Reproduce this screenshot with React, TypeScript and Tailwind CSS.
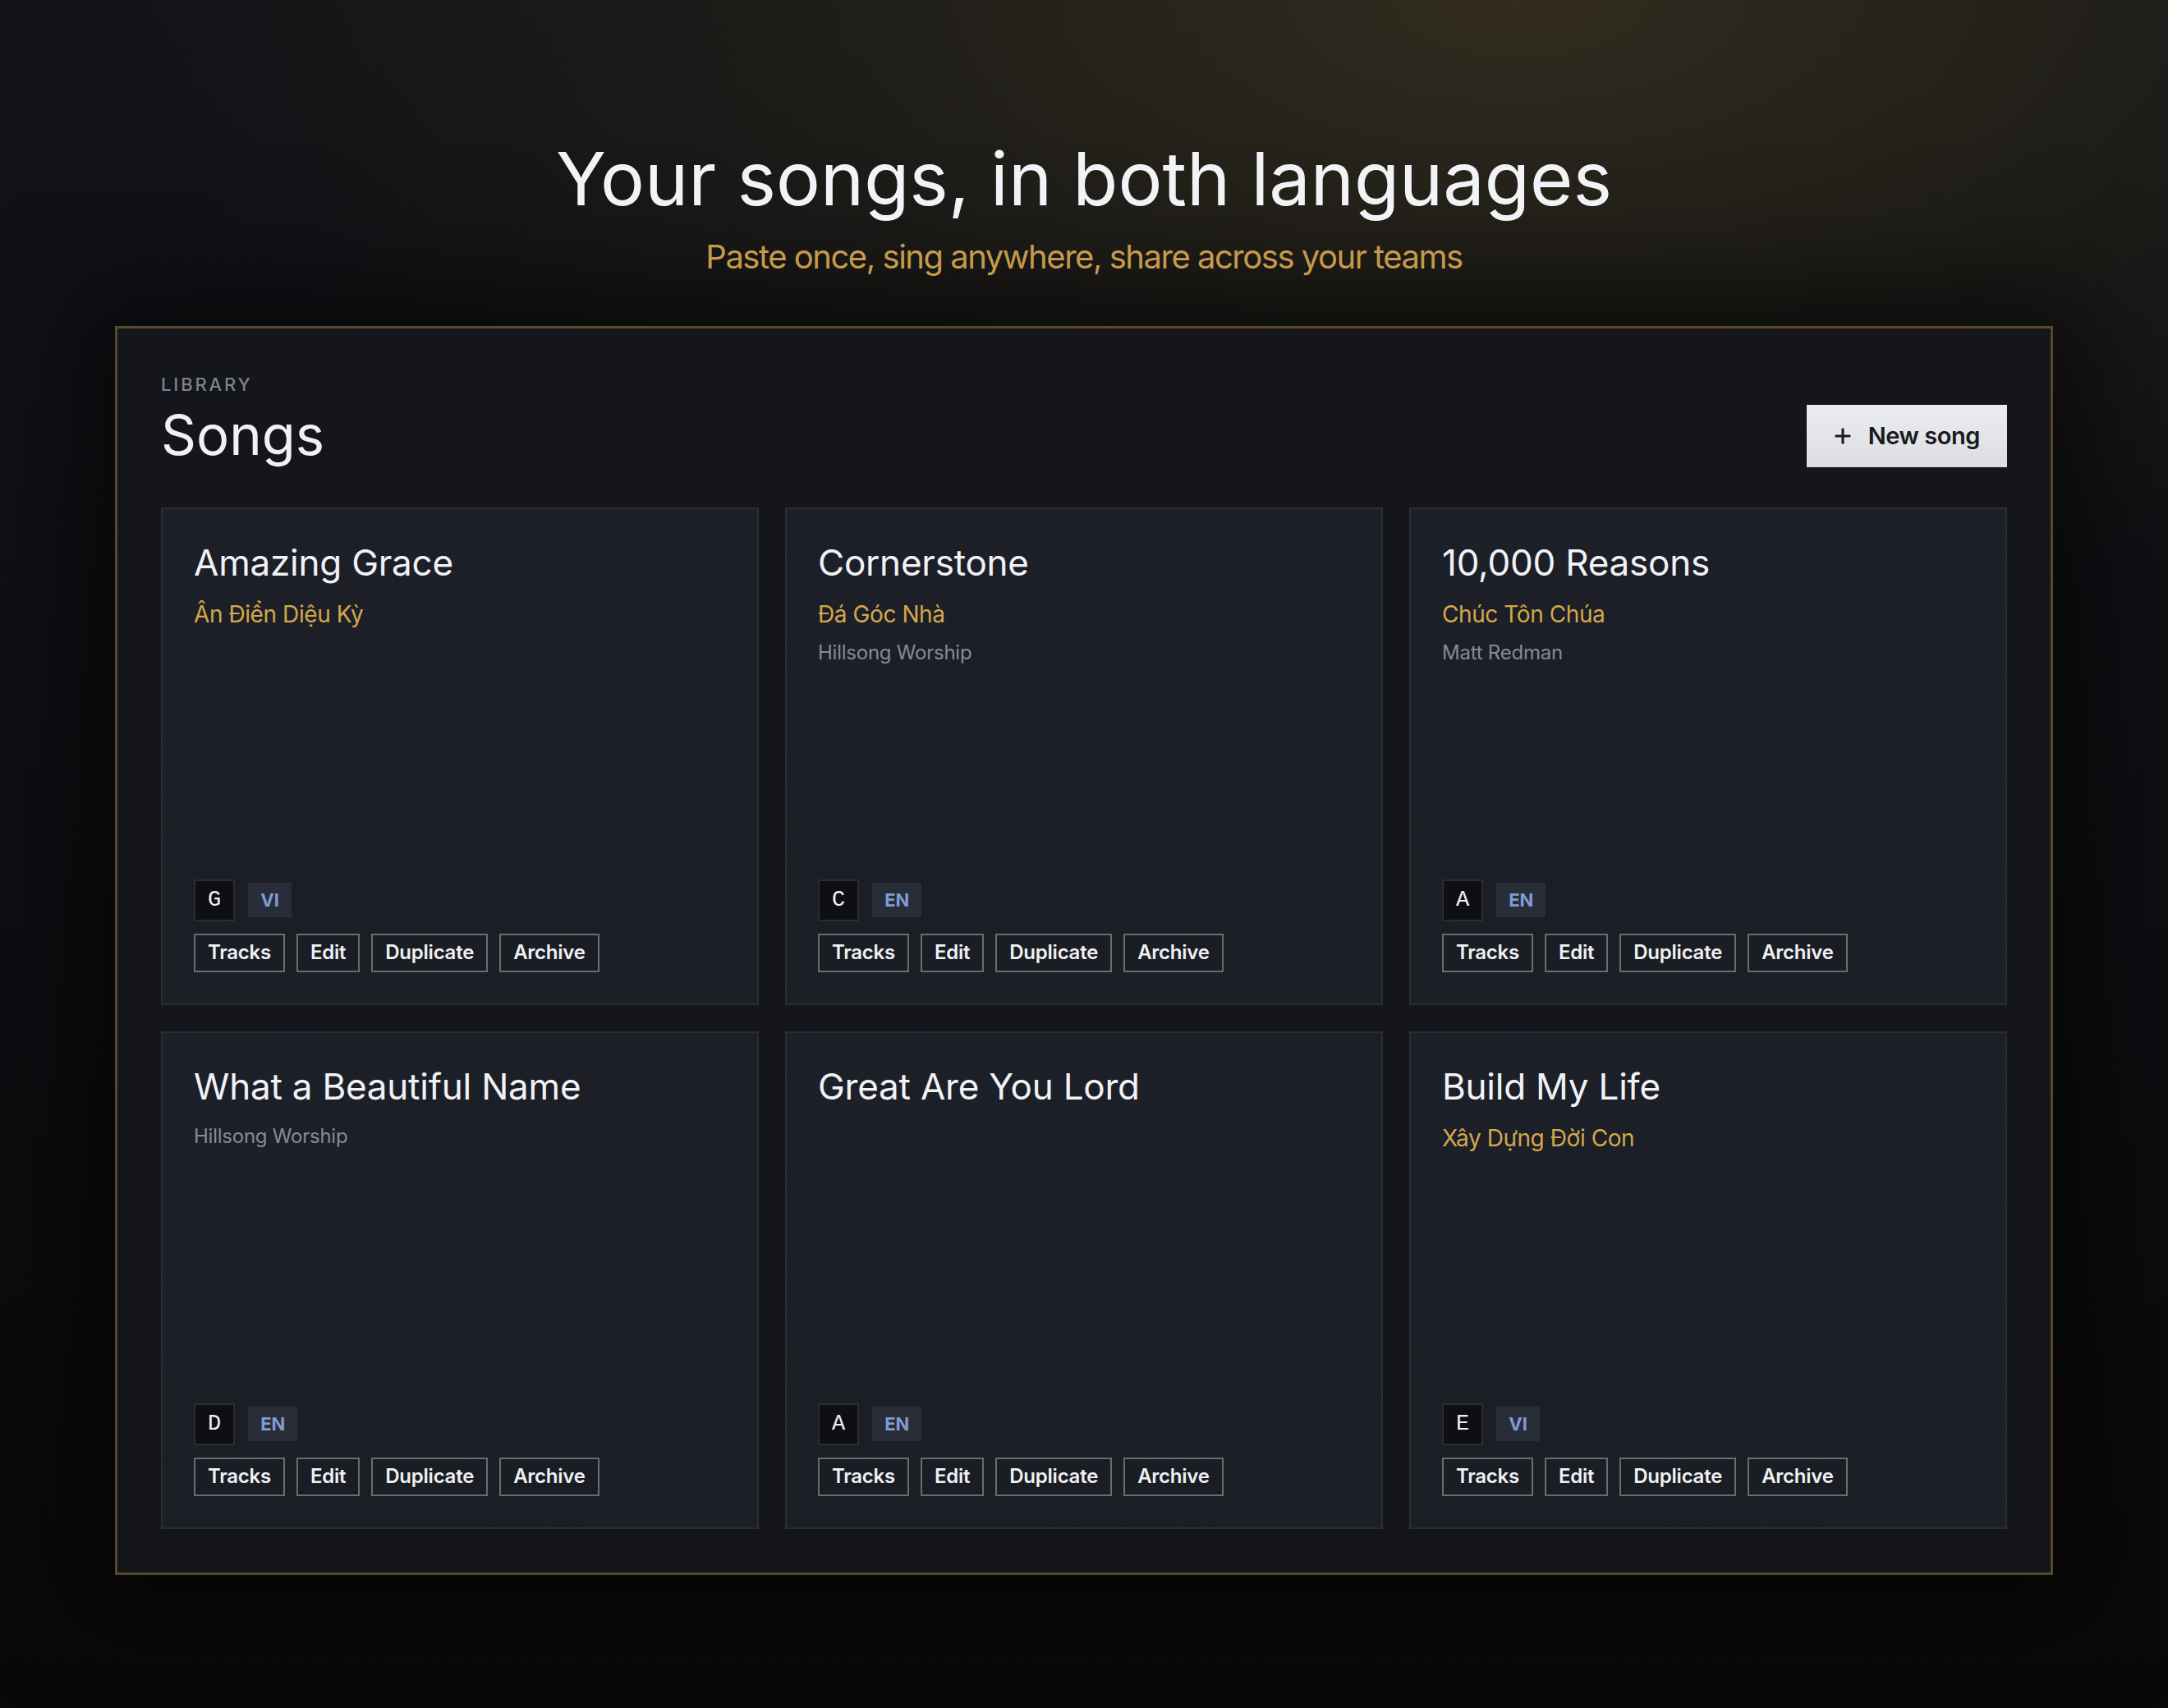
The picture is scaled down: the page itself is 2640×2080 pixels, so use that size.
import { Plus } from "lucide-react";

type Song = {
  title: string;
  vi?: string;
  artist?: string;
  songKey: string;
  lang: string;
};

const songs: Song[] = [
  { title: "Amazing Grace", vi: "Ân Điển Diệu Kỳ", songKey: "G", lang: "VI" },
  {
    title: "Cornerstone",
    vi: "Đá Góc Nhà",
    artist: "Hillsong Worship",
    songKey: "C",
    lang: "EN",
  },
  {
    title: "10,000 Reasons",
    vi: "Chúc Tôn Chúa",
    artist: "Matt Redman",
    songKey: "A",
    lang: "EN",
  },
  {
    title: "What a Beautiful Name",
    artist: "Hillsong Worship",
    songKey: "D",
    lang: "EN",
  },
  { title: "Great Are You Lord", songKey: "A", lang: "EN" },
  { title: "Build My Life", vi: "Xây Dựng Đời Con", songKey: "E", lang: "VI" },
];

const actions = ["Tracks", "Edit", "Duplicate", "Archive"];

function SongCard({ song }: { song: Song }) {
  return (
    <article className="flex min-h-[606px] flex-col justify-between border-2 border-[#2a2d34] bg-[linear-gradient(160deg,#1d2028_0%,#1b1e25_60%,#1c1f26_100%)] px-[38px] pt-[39px] pb-[38px]">
      <div className="flex flex-col">
        <h3 className="text-[44px] leading-[1.2] font-normal tracking-[-0.005em] text-[#f1f2f6]">
          {song.title}
        </h3>
        {song.vi && (
          <p className="mt-[18px] text-[28px] leading-[1.3] tracking-[-0.015em] text-[#d3a84b]">
            {song.vi}
          </p>
        )}
        {song.artist && (
          <p
            className={`${song.vi ? "mt-[13px]" : "mt-[18px]"} text-[24px] leading-[1.3] tracking-[-0.01em] text-[#868b97]`}
          >
            {song.artist}
          </p>
        )}
      </div>

      <div className="flex flex-col gap-[15px]">
        <div className="flex items-center gap-4">
          <span className="flex h-[51px] items-center border-2 border-[#2b2d33] bg-[#0e0f12] px-[15px] font-['Liberation_Mono',monospace] text-[27px] text-[#f2f2f4]">
            {song.songKey}
          </span>
          <span className="flex h-[42px] items-center bg-[#282d38] px-[15px] text-[22px] font-bold text-[#7f9cd3]">
            {song.lang}
          </span>
        </div>
        <div className="flex gap-[14px]">
          {actions.map((action) => (
            <button
              key={action}
              type="button"
              className="h-[47px] border-2 border-[#6a6c72] bg-[#1a1d23] px-[15px] text-[24px] font-semibold tracking-[-0.01em] text-[#eff0f3]"
            >
              {action}
            </button>
          ))}
        </div>
      </div>
    </article>
  );
}

export default function App() {
  return (
    <div className="min-h-[2080px] w-full bg-[#0b0c0e] bg-[radial-gradient(ellipse_2100px_950px_at_70%_0%,rgba(58,50,32,0.8),rgba(42,37,26,0.45)_45%,transparent_80%),linear-gradient(180deg,#121418_0%,#0d0e11_55%,#09090a_100%)] font-['Inter','Noto_Sans',sans-serif] pt-[168px] pb-[160px]">
      <header className="flex flex-col items-center text-center">
        <h1 className="text-[90px] leading-[1.1] font-normal text-[#f2f3f7]">
          Your songs, in both languages
        </h1>
        <p className="mt-[20px] text-[40px] leading-[1.3] tracking-[-0.037em] text-[#c59b4b]">
          Paste once, sing anywhere, share across your teams
        </p>
      </header>

      <main className="mx-auto mt-[58px] w-[2360px] border-[3px] border-[#58492b] bg-[#14161b] px-[53px] pt-[53px] pb-[53px] shadow-[0_0_120px_40px_rgba(0,0,0,0.55)]">
        <div className="flex items-end justify-between">
          <div>
            <p className="text-[22px] leading-[1.4] font-medium tracking-[0.13em] text-[#7d828d]">
              LIBRARY
            </p>
            <h2 className="mt-[7px] text-[67px] leading-[1.15] font-normal text-[#f0f1f5]">
              Songs
            </h2>
          </div>
          <button
            type="button"
            className="mb-[-1px] flex h-[76px] items-center gap-[17px] bg-[linear-gradient(180deg,#ecedf1_0%,#dcdde2_100%)] pr-[33px] pl-[30px] text-[29px] font-semibold tracking-[-0.015em] text-[#1a1b21]"
          >
            <Plus size={28} strokeWidth={2.6} />
            New song
          </button>
        </div>

        <div className="mt-[50px] grid grid-cols-3 gap-8">
          {songs.map((song) => (
            <SongCard key={song.title} song={song} />
          ))}
        </div>
      </main>
    </div>
  );
}
